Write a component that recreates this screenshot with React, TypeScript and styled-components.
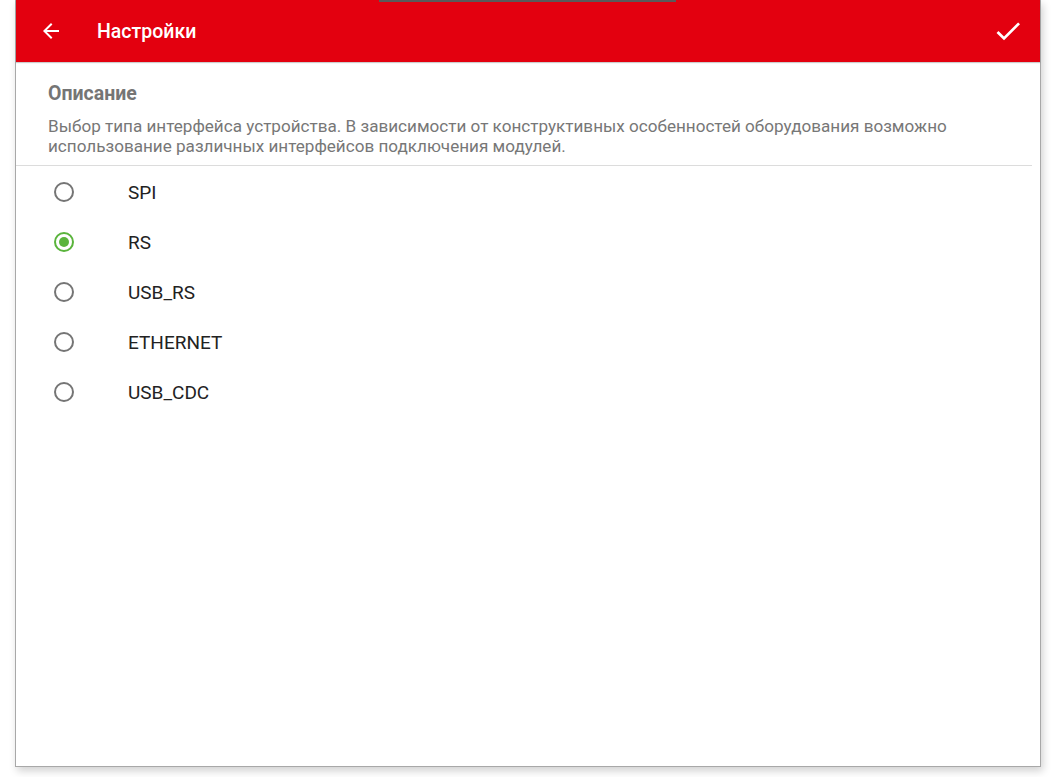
import React from "react";
import styled, { createGlobalStyle } from "styled-components";

const Global = createGlobalStyle`
  html, body {
    margin: 0;
    padding: 0;
    background: #ffffff;
    font-family: Roboto, "Noto Sans", sans-serif;
  }
`;

const Page = styled.div`
  position: relative;
  width: 1054px;
  height: 777px;
  overflow: hidden;
  background: #ffffff;
`;

const Window = styled.div`
  margin-left: 15px;
  width: 1024px;
  height: 766px;
  border: 1px solid #a8a8a8;
  border-top: none;
  background: #ffffff;
  box-shadow: 2px 4px 8px rgba(0, 0, 0, 0.18);
  display: flex;
  flex-direction: column;
`;

const TopNotch = styled.div`
  position: absolute;
  top: 0;
  left: 379px;
  width: 297px;
  height: 2px;
  background: #5a5a5a;
`;

const Toolbar = styled.div`
  height: 62px;
  background: #e3000f;
  display: flex;
  align-items: center;
  padding: 0 16px 0 23px;
  box-shadow: 0 1px 1px rgba(0, 0, 0, 0.2);
  flex-shrink: 0;
`;

const IconButton = styled.button<{ $size?: number }>`
  width: ${(p) => p.$size ?? 24}px;
  height: ${(p) => p.$size ?? 24}px;
  padding: 0;
  border: none;
  background: none;
  display: flex;
  align-items: center;
  justify-content: center;
  color: #ffffff;
`;

const Title = styled.div`
  margin-left: 34px;
  flex: 1;
  font-size: 19.5px;
  font-weight: 500;
  color: #ffffff;
`;

const Description = styled.div`
  padding: 20px 32px 9px 32px;
  border-bottom: 1px solid #dcdcdc;
  margin-right: 8px;
`;

const Heading = styled.div`
  font-size: 19.5px;
  font-weight: 700;
  color: #757575;
  line-height: 24px;
`;

const Text = styled.div`
  margin-top: 10px;
  font-size: 17.1px;
  line-height: 20px;
  color: #777777;
`;

const List = styled.div`
  display: flex;
  flex-direction: column;
  padding-top: 1px;
`;

const Row = styled.label`
  height: 50px;
  display: flex;
  align-items: center;
  padding-left: 38px;
`;

const Radio = styled.span<{ $on?: boolean }>`
  width: 20px;
  height: 20px;
  box-sizing: border-box;
  border-radius: 50%;
  border: 2px solid ${(p) => (p.$on ? "#5ab43c" : "#757575")};
  display: flex;
  align-items: center;
  justify-content: center;

  &::after {
    content: "";
    width: 10px;
    height: 10px;
    border-radius: 50%;
    background: ${(p) => (p.$on ? "#5ab43c" : "transparent")};
  }
`;

const Label = styled.span`
  margin-left: 54px;
  font-size: 19px;
  color: #222222;
`;

const options = ["SPI", "RS", "USB_RS", "ETHERNET", "USB_CDC"];

export default function App() {
  return (
    <Page>
      <Global />
      <Window>
        <Toolbar>
          <IconButton>
            <svg width="24" height="24" viewBox="0 0 24 24" fill="#ffffff">
              <path d="M20 11H7.83l5.59-5.59L12 4l-8 8 8 8 1.41-1.41L7.83 13H20v-2z" />
            </svg>
          </IconButton>
          <Title>Настройки</Title>
          <IconButton $size={32}>
            <svg width="32" height="32" viewBox="0 0 24 24" fill="#ffffff">
              <path d="M9 16.17L4.83 12l-1.42 1.41L9 19 21 7l-1.41-1.41z" />
            </svg>
          </IconButton>
        </Toolbar>
        <Description>
          <Heading>Описание</Heading>
          <Text>
            Выбор типа интерфейса устройства. В зависимости от конструктивных особенностей
            оборудования возможно использование различных интерфейсов подключения модулей.
          </Text>
        </Description>
        <List>
          {options.map((o) => (
            <Row key={o}>
              <Radio $on={o === "RS"} />
              <Label>{o}</Label>
            </Row>
          ))}
        </List>
      </Window>
      <TopNotch />
    </Page>
  );
}
